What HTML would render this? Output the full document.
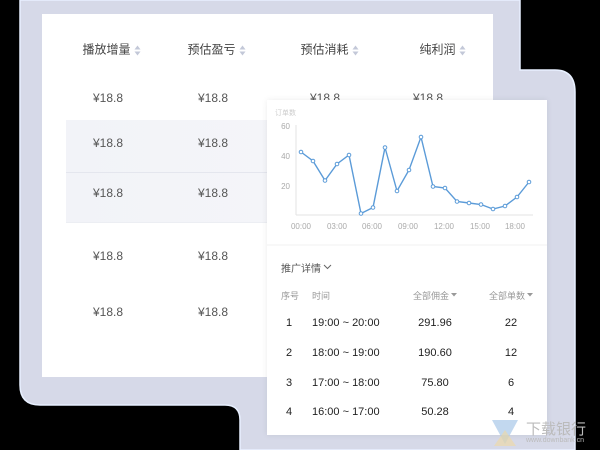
<!DOCTYPE html>
<html><head><meta charset="utf-8"><style>
*{margin:0;padding:0;box-sizing:border-box}
body{width:600px;height:450px;background:#000;position:relative;overflow:hidden;font-family:"Liberation Sans","Noto Sans CJK SC",sans-serif}
.a{position:absolute}
.t{position:absolute;transform:translate(-50%,-50%);white-space:nowrap}
.h{font-size:12px;color:#444}
.v{font-size:12px;color:#555}
.sort{display:inline-block;margin-left:4px;vertical-align:middle;width:7px;height:10px;position:relative}
.sort:before{content:"";position:absolute;left:0;top:0;border:3.5px solid transparent;border-bottom:4px solid #c3c8d8;border-top:0}
.sort:after{content:"";position:absolute;left:0;bottom:0;border:3.5px solid transparent;border-top:4px solid #c3c8d8;border-bottom:0}
</style></head><body>
<svg class="a" style="left:0;top:0" width="600" height="450">
<path d="M20 0 H520 V70 H555 Q575 70 575 92 V450 H240 V420 Q240 405 225 405 H40 Q20 405 20 385 Z" fill="#d6d9e8" stroke="#e8f0ff" stroke-width="1.5"/>
</svg>
<div class="a" style="left:42px;top:14px;width:451px;height:363px;background:#fff"></div>
<div class="a" style="left:66px;top:120px;width:427px;height:102px;background:linear-gradient(90deg,#f2f3f8,#f6f7fa)"></div>
<div class="a" style="left:66px;top:172px;width:427px;height:1px;background:#e4e6ee"></div>
<div class="a" style="left:66px;top:222px;width:427px;height:1px;background:#eceef3"></div>
<div class="t h" style="left:112px;top:49px">播放增量<span class="sort"></span></div>
<div class="t h" style="left:217px;top:49px">预估盈亏<span class="sort"></span></div>
<div class="t h" style="left:330px;top:49px">预估消耗<span class="sort"></span></div>
<div class="t h" style="left:443px;top:49px">纯利润<span class="sort"></span></div>
<div class="t v" style="left:108px;top:98px">¥18.8</div><div class="t v" style="left:213px;top:98px">¥18.8</div><div class="t v" style="left:325px;top:98px">¥18.8</div><div class="t v" style="left:428px;top:98px">¥18.8</div>
<div class="t v" style="left:108px;top:143px">¥18.8</div><div class="t v" style="left:213px;top:143px">¥18.8</div>
<div class="t v" style="left:108px;top:193px">¥18.8</div><div class="t v" style="left:213px;top:193px">¥18.8</div>
<div class="t v" style="left:108px;top:256px">¥18.8</div><div class="t v" style="left:213px;top:256px">¥18.8</div>
<div class="t v" style="left:108px;top:312px">¥18.8</div><div class="t v" style="left:213px;top:312px">¥18.8</div>

<div class="a" style="left:267px;top:100px;width:280px;height:335px;background:#fff;box-shadow:0 0 6px rgba(0,0,0,.08)"></div>
<svg class="a" style="left:0;top:0" width="600" height="450" font-family="Liberation Sans" font-size="8" fill="#aaa">
<text x="275" y="115" font-size="7" fill="#ccc" font-family="Noto Sans CJK SC">订单数</text>
<text x="290" y="129" text-anchor="end">60</text><text x="290" y="159" text-anchor="end">40</text><text x="290" y="189" text-anchor="end">20</text>
<line x1="296" y1="125" x2="296" y2="215" stroke="#e3e3e3"/><line x1="296" y1="215" x2="533" y2="215" stroke="#e3e3e3"/>
<g text-anchor="middle"><text x="301" y="229">00:00</text><text x="337" y="229">03:00</text><text x="372" y="229">06:00</text><text x="408" y="229">09:00</text><text x="444" y="229">12:00</text><text x="480" y="229">15:00</text><text x="515" y="229">18:00</text></g>
<polyline fill="none" stroke="#5b9bd8" stroke-width="1.4" points="301,152 313,161 325,180.5 337,164 349,155 361,213.5 373,207.5 385,147.5 397,191 409,170 421,137 433,186.5 445,188 457,201.5 469,203 481,204.5 493,209 505,206 517,197 529,182"/>
<g fill="#fff" stroke="#5b9bd8" stroke-width="1"><circle cx="301" cy="152" r="1.8"/><circle cx="313" cy="161" r="1.8"/><circle cx="325" cy="180.5" r="1.8"/><circle cx="337" cy="164" r="1.8"/><circle cx="349" cy="155" r="1.8"/><circle cx="361" cy="213.5" r="1.8"/><circle cx="373" cy="207.5" r="1.8"/><circle cx="385" cy="147.5" r="1.8"/><circle cx="397" cy="191" r="1.8"/><circle cx="409" cy="170" r="1.8"/><circle cx="421" cy="137" r="1.8"/><circle cx="433" cy="186.5" r="1.8"/><circle cx="445" cy="188" r="1.8"/><circle cx="457" cy="201.5" r="1.8"/><circle cx="469" cy="203" r="1.8"/><circle cx="481" cy="204.5" r="1.8"/><circle cx="493" cy="209" r="1.8"/><circle cx="505" cy="206" r="1.8"/><circle cx="517" cy="197" r="1.8"/><circle cx="529" cy="182" r="1.8"/></g>
<line x1="267" y1="245" x2="547" y2="245" stroke="#f0f0f0"/>
<path d="M324 265 l3.5 3.5 l3.5 -3.5" fill="none" stroke="#666" stroke-width="1"/>
<path d="M451 293 h6 l-3 3.5z M527 293 h6 l-3 3.5z" fill="#999"/>
</svg>
<div class="a" style="left:281px;top:260px;font-size:10px;color:#555">推广详情</div>
<div class="a" style="left:281px;top:289px;font-size:9px;color:#999">序号</div>
<div class="a" style="left:312px;top:289px;font-size:9px;color:#999">时间</div>
<div class="a" style="left:413px;top:289px;font-size:9px;color:#999">全部佣金</div>
<div class="a" style="left:489px;top:289px;font-size:9px;color:#999">全部单数</div>
<div style="font-size:11px;color:#222">
<div class="t" style="left:289px;top:323px">1</div><div class="a" style="left:312px;top:317px">19:00 ~ 20:00</div><div class="t" style="left:435px;top:323px">291.96</div><div class="t" style="left:511px;top:323px">22</div>
<div class="t" style="left:289px;top:353px">2</div><div class="a" style="left:312px;top:347px">18:00 ~ 19:00</div><div class="t" style="left:435px;top:353px">190.60</div><div class="t" style="left:511px;top:353px">12</div>
<div class="t" style="left:289px;top:383px">3</div><div class="a" style="left:312px;top:377px">17:00 ~ 18:00</div><div class="t" style="left:435px;top:383px">75.80</div><div class="t" style="left:511px;top:383px">6</div>
<div class="t" style="left:289px;top:412px">4</div><div class="a" style="left:312px;top:406px">16:00 ~ 17:00</div><div class="t" style="left:435px;top:412px">50.28</div><div class="t" style="left:511px;top:412px">4</div>
</div>
<svg class="a" style="left:490px;top:418px" width="40" height="30"><path d="M2 2 H28 L15 26 Z" fill="#a8c8e8" opacity=".7"/><path d="M15 12 L26 28 H4Z" fill="#f0d8a0" opacity=".6"/></svg>
<div class="a" style="left:526px;top:418px;font-size:15px;color:#bbb">下载银行</div>
<div class="a" style="left:526px;top:437px;font-size:7px;color:#bbb">www.downbank.cn</div>
</body></html>
